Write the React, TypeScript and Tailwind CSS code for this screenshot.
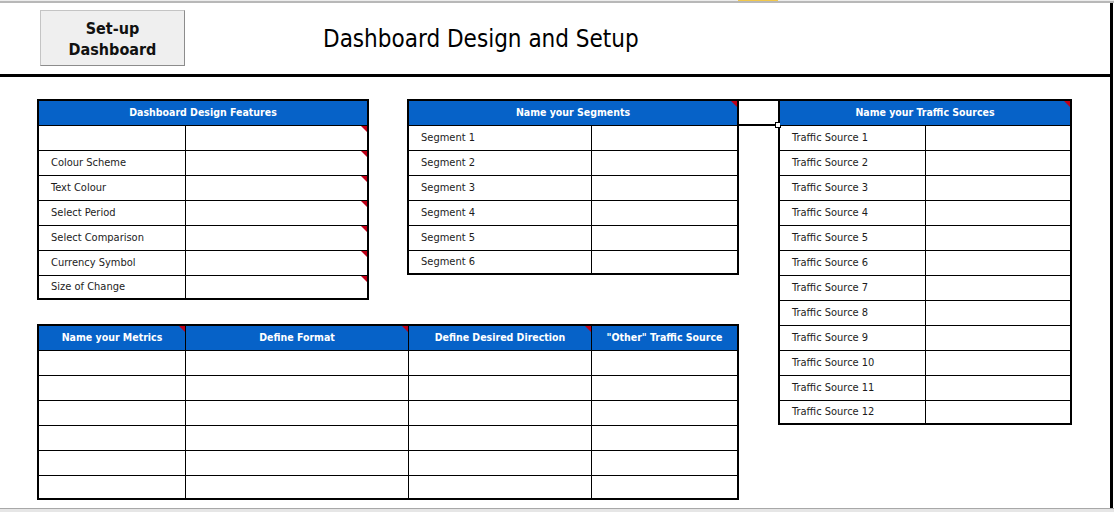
import React from "react";

const cellFont = "font-['DejaVu_Sans_Condensed','DejaVu_Sans',sans-serif]";

function Flag() {
  return (
    <span className="absolute right-0 top-0 h-0 w-0 border-l-[6px] border-t-[6px] border-l-transparent border-t-[#c00018]" />
  );
}

interface TableProps {
  width: string;
  cols: string[];
  header: string[];
  headerFlags?: boolean[];
  rows: string[][];
  rowFlags?: boolean;
}

function SheetTable({ width, cols, header, headerFlags = [], rows, rowFlags = false }: TableProps) {
  const single = header.length === 1;
  return (
    <div className={`${width} border-2 border-black bg-white ${cellFont}`}>
      {single ? (
        <div className="relative flex h-[24px] items-center justify-center bg-[#0662c8] text-[10.5px] font-bold text-white">
          {header[0]}
          {headerFlags[0] && <Flag />}
        </div>
      ) : (
        <div className="flex h-[24px] bg-[#0662c8]">
          {header.map((h, i) => (
            <div
              key={h}
              className={`relative flex items-center justify-center text-[10.5px] font-bold text-white ${cols[i]} ${i > 0 ? "border-l border-black" : ""}`}
            >
              {h}
              {headerFlags[i] && <Flag />}
            </div>
          ))}
        </div>
      )}
      {rows.map((r, ri) => (
        <div key={ri} className={`flex border-t border-black ${ri === rows.length - 1 ? "h-[23px]" : "h-[25px]"}`}>
          {cols.map((c, ci) => (
            <div
              key={ci}
              className={`relative flex items-center pl-[12px] text-[11px] text-[#1c1c1c] ${c} ${ci > 0 ? "border-l border-black" : ""}`}
            >
              {r[ci] ?? ""}
              {rowFlags && ci === cols.length - 1 && <Flag />}
            </div>
          ))}
        </div>
      ))}
    </div>
  );
}

const designRows = [
  [""],
  ["Colour Scheme"],
  ["Text Colour"],
  ["Select Period"],
  ["Select Comparison"],
  ["Currency Symbol"],
  ["Size of Change"],
];

const segmentRows = [1, 2, 3, 4, 5, 6].map((n) => [`Segment ${n}`]);
const trafficRows = Array.from({ length: 12 }, (_, i) => [`Traffic Source ${i + 1}`]);
const metricRows = Array.from({ length: 6 }, () => [] as string[]);

export default function App() {
  return (
    <div className="relative h-[512px] w-[1114px] overflow-hidden bg-white">
      {/* column header remnant */}
      <div className="relative h-[3px] border-b-2 border-[#b8b8b8] bg-[#ececec]">
        <span className="absolute left-[738px] top-0 h-[1px] w-[40px] bg-[#f2c84b]" />
      </div>

      <div className="h-[505px] w-[1113px] border-r-[3px] border-black">
        <div className="flex h-[74px] items-center border-b-[3px] border-black">
          <button className="ml-[40px] mt-[-1px] flex h-[56px] w-[145px] flex-col items-center justify-center border border-[#c4c4c4] border-b-[#8c8c8c] border-r-[#8c8c8c] bg-[#efefef] pt-[2px] font-['DejaVu_Sans_Condensed','DejaVu_Sans',sans-serif] text-[16px] font-bold leading-[21px] text-[#111]">
            <span>Set-up</span>
            <span>Dashboard</span>
          </button>
          <h1 className="ml-[138px] mt-[1px] font-['DejaVu_Sans_Condensed','DejaVu_Sans',sans-serif] text-[24px] text-black">
            Dashboard Design and Setup
          </h1>
        </div>

        <div className="flex items-start pl-[37px] pt-[22px]">
          <div className="flex w-[702px] flex-col">
            <div className="flex items-start gap-[38px]">
              <SheetTable
                width="w-[332px]"
                cols={["w-[146px]", "w-[182px]"]}
                header={["Dashboard Design Features"]}
                rows={designRows}
                rowFlags
              />
              <SheetTable
                width="w-[332px]"
                cols={["w-[182px]", "w-[146px]"]}
                header={["Name your Segments"]}
                headerFlags={[true]}
                rows={segmentRows}
              />
            </div>
            <div className="mt-[24px]">
              <SheetTable
                width="w-[702px]"
                cols={["w-[146px]", "w-[223px]", "w-[183px]", "w-[146px]"]}
                header={["Name your Metrics", "Define Format", "Define Desired Direction", "\"Other\" Traffic Source"]}
                headerFlags={[true, true, true, false]}
                rows={metricRows}
              />
            </div>
          </div>

          {/* active cell */}
          <div className="relative h-[27px] w-[39px] border-y-2 border-black">
            <span className="absolute bottom-[-4px] right-[-3px] h-[6px] w-[6px] border border-black bg-white" />
          </div>

          <SheetTable
            width="w-[294px]"
            cols={["w-[145px]", "w-[145px]"]}
            header={["Name your Traffic Sources"]}
            headerFlags={[true]}
            rows={trafficRows}
          />
        </div>
      </div>

      {/* sheet tab bar edge */}
      <div className="h-[4px] border-t border-[#a8a8a8] bg-[#e6e6e6]" />
    </div>
  );
}
